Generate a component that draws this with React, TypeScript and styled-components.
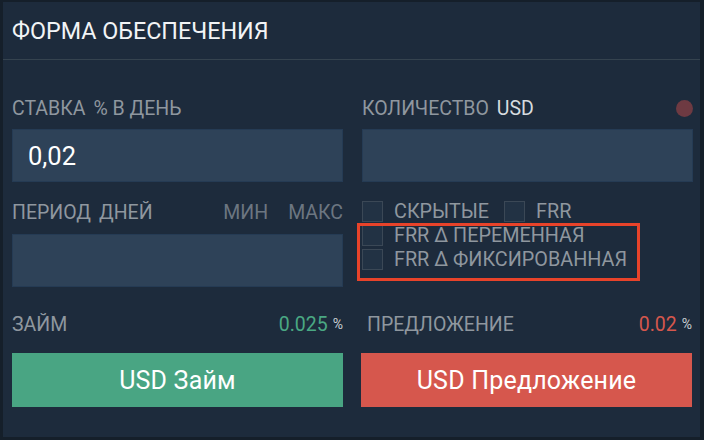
import styled, { createGlobalStyle } from "styled-components"

const Global = createGlobalStyle`
  html, body { margin: 0; padding: 0; background: #151f2a; }
  body { font-family: Roboto, "Liberation Sans", sans-serif; }
`

const Panel = styled.div`
  margin: 2px 4px 0 3px;
  height: 435px;
  background: #1d2b3c;
  display: flex;
  flex-direction: column;
`

const Header = styled.div`
  height: 58px;
  border-bottom: 1px solid #35434f;
  display: flex;
  align-items: center;
  padding-left: 9px;
  padding-top: 1px;
  box-sizing: border-box;
`

const Title = styled.div`
  color: #f2f4f6;
  font-size: 23.3px;
`

const Body = styled.div`
  padding: 37px 8px 0 9px;
  display: grid;
  grid-template-columns: 331px 331px;
  column-gap: 19px;
`

const Column = styled.div`
  display: flex;
  flex-direction: column;
`

const LabelRow = styled.div<{ $mt?: number; $pl?: number }>`
  height: 22px;
  display: flex;
  align-items: center;
  margin-top: ${(p) => p.$mt ?? 0}px;
  padding-left: ${(p) => p.$pl ?? 0}px;
  font-size: 19.5px;
  color: #8f979f;
  white-space: nowrap;
`

const Unit = styled.span<{ $light?: boolean }>`
  margin-left: 8px;
  color: ${(p) => (p.$light ? "#d7dbdf" : "#8f979f")};
`

const Spacer = styled.div`
  flex: 1;
`

const Hint = styled.span`
  color: #6c7681;
  margin-left: 20px;
`

const Dot = styled.span`
  width: 17px;
  height: 17px;
  border-radius: 50%;
  background: #6e3a42;
`

const Input = styled.div<{ $mt?: number }>`
  height: 53px;
  margin-top: ${(p) => p.$mt ?? 10}px;
  background: #2e4258;
  border: 1px solid #253b54;
  box-sizing: border-box;
  display: flex;
  align-items: center;
  padding-left: 15px;
  color: #ffffff;
  font-size: 25.5px;
`

const Checks = styled.div`
  margin-top: 19px;
  position: relative;
  display: flex;
  flex-direction: column;
  gap: 3px;
`

const CheckRow = styled.div`
  display: flex;
  align-items: center;
  height: 21px;
`

const Box = styled.span<{ $ml?: number }>`
  width: 21px;
  height: 21px;
  box-sizing: border-box;
  border: 1px solid #3b4856;
  background: #223244;
  margin-left: ${(p) => p.$ml ?? 0}px;
  flex: none;
`

const CheckText = styled.span`
  margin-left: 11px;
  font-size: 19.8px;
  color: #8f979f;
  white-space: nowrap;
`

const Highlight = styled.div`
  position: absolute;
  left: -5px;
  top: 22px;
  width: 283px;
  height: 58px;
  border: 3px solid #e8432a;
  box-sizing: border-box;
  pointer-events: none;
`

const Footer = styled.div`
  padding: 26px 8px 0 9px;
  display: grid;
  grid-template-columns: 331px 331px;
  column-gap: 18px;
`

const Rate = styled.span<{ $color: string }>`
  color: ${(p) => p.$color};
  font-size: 19.5px;
`

const Pct = styled.span`
  color: #c9ced3;
  font-size: 14px;
  margin-left: 5px;
`

const Action = styled.div<{ $bg: string }>`
  margin-top: 18px;
  height: 54px;
  background: ${(p) => p.$bg};
  display: flex;
  align-items: center;
  justify-content: center;
  color: #ffffff;
  font-size: 25px;
  letter-spacing: 0.2px;
`

export default function App() {
  return (
    <>
      <Global />
      <Panel>
        <Header>
          <Title>ФОРМА ОБЕСПЕЧЕНИЯ</Title>
        </Header>
        <Body>
          <Column>
            <LabelRow>
              СТАВКА<Unit>% В ДЕНЬ</Unit>
            </LabelRow>
            <Input>0,02</Input>
            <LabelRow $mt={19}>
              ПЕРИОД<Unit>ДНЕЙ</Unit>
              <Spacer />
              <Hint>МИН</Hint>
              <Hint>МАКС</Hint>
            </LabelRow>
            <Input $mt={11} />
          </Column>
          <Column>
            <LabelRow>
              КОЛИЧЕСТВО<Unit $light>USD</Unit>
              <Spacer />
              <Dot />
            </LabelRow>
            <Input />
            <Checks>
              <CheckRow>
                <Box />
                <CheckText>СКРЫТЫЕ</CheckText>
                <Box $ml={15} />
                <CheckText>FRR</CheckText>
              </CheckRow>
              <CheckRow>
                <Box />
                <CheckText>FRR Δ ПЕРЕМЕННАЯ</CheckText>
              </CheckRow>
              <CheckRow>
                <Box />
                <CheckText>FRR Δ ФИКСИРОВАННАЯ</CheckText>
              </CheckRow>
              <Highlight />
            </Checks>
          </Column>
        </Body>
        <Footer>
          <Column>
            <LabelRow>
              ЗАЙМ
              <Spacer />
              <Rate $color="#4aa883">0.025</Rate>
              <Pct>%</Pct>
            </LabelRow>
            <Action $bg="#49a583">USD Займ</Action>
          </Column>
          <Column>
            <LabelRow $pl={6}>
              ПРЕДЛОЖЕНИЕ
              <Spacer />
              <Rate $color="#d6574d">0.02</Rate>
              <Pct>%</Pct>
            </LabelRow>
            <Action $bg="#d6574d">USD Предложение</Action>
          </Column>
        </Footer>
      </Panel>
    </>
  )
}
